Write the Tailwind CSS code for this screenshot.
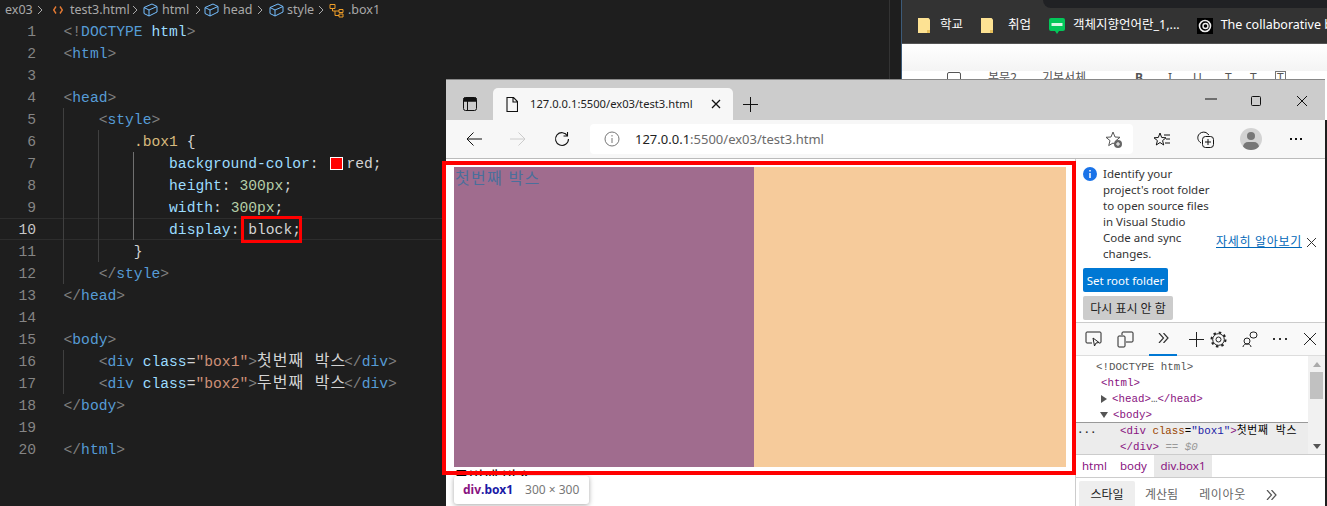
<!DOCTYPE html>
<html lang="ko">
<head>
<meta charset="UTF-8">
<title>test3.html</title>
<script src="https://cdn.jsdelivr.net/npm/@tailwindcss/browser@4"></script>
</head>
<body class="relative w-[1327px] h-[506px] overflow-hidden bg-[#1e1e1e] font-['Noto_Sans','Noto_Sans_CJK_KR',sans-serif]">

<!-- Editor window -->
<div class="absolute left-0 top-0 w-[890px] h-[506px] overflow-hidden bg-[#1e1e1e] border-r border-[#333]">
  <!-- breadcrumb -->
  <div class="h-[20px] pl-[5px] flex items-center text-[12.5px] text-[#a9a9a9] leading-none">
    <span class="w-[27px]">ex03</span>
    <svg class="ml-[5px] w-[6px] h-[10px]" viewBox="0 0 6 10" fill="none" stroke="#a9a9a9"><path d="M1 1l4 4-4 4"/></svg>
    <svg class="ml-[10px] w-[10px] h-[10px]" viewBox="0 0 10 10" fill="none" stroke="#e37933" stroke-width="1.4"><path d="M3 1.500L.7 5 3 8.500M7 1.500L9.300 5 7 8.500"/></svg>
    <span class="ml-[7px] w-[57px]">test3.html</span>
    <svg class="ml-[5px] w-[6px] h-[10px]" viewBox="0 0 6 10" fill="none" stroke="#a9a9a9"><path d="M1 1l4 4-4 4"/></svg>
    <svg class="ml-[5px] w-[15px] h-[14px]" viewBox="0 0 15 14" fill="none" stroke="#75beff"><path d="M1 4.500L9 1l5 2.500v5.500L6 13 1 10.500zM1 4.500L6 7l8-3.500M6 7v6"/></svg>
    <span class="ml-[4px] w-[28px]">html</span>
    <svg class="ml-[5px] w-[6px] h-[10px]" viewBox="0 0 6 10" fill="none" stroke="#a9a9a9"><path d="M1 1l4 4-4 4"/></svg>
    <svg class="ml-[3px] w-[15px] h-[14px]" viewBox="0 0 15 14" fill="none" stroke="#75beff"><path d="M1 4.500L9 1l5 2.500v5.500L6 13 1 10.500zM1 4.500L6 7l8-3.500M6 7v6"/></svg>
    <span class="ml-[4px] w-[28px]">head</span>
    <svg class="ml-[6px] w-[6px] h-[10px]" viewBox="0 0 6 10" fill="none" stroke="#a9a9a9"><path d="M1 1l4 4-4 4"/></svg>
    <svg class="ml-[6px] w-[15px] h-[14px]" viewBox="0 0 15 14" fill="none" stroke="#75beff"><path d="M1 4.500L9 1l5 2.500v5.500L6 13 1 10.500zM1 4.500L6 7l8-3.500M6 7v6"/></svg>
    <span class="ml-[3px] w-[27px]">style</span>
    <svg class="ml-[4px] w-[6px] h-[10px]" viewBox="0 0 6 10" fill="none" stroke="#a9a9a9"><path d="M1 1l4 4-4 4"/></svg>
    <svg class="ml-[5px] w-[16px] h-[15px]" viewBox="0 0 16 15" fill="none" stroke="#ee9d28"><path d="M1 1.500h5v4H1zM10 6.500h4v3h-4zM10 11h4v3h-4zM3.500 5.500V8H10M6 8v4.500h4"/></svg>
    <span class="ml-[3px]">.box1</span>
  </div>

  <!-- code -->
  <div class="relative flex flex-col font-['Liberation_Mono','Noto_Sans_CJK_KR',monospace] text-[14.67px] leading-[24px] text-[#d4d4d4] whitespace-pre">
    <span class="absolute left-[63px] top-[88px] h-[176px] w-px bg-[#404040]"></span>
    <span class="absolute left-[98px] top-[110px] h-[132px] w-px bg-[#404040]"></span>
    <span class="absolute left-[133px] top-[132px] h-[88px] w-px bg-[#707070]"></span>
    <span class="absolute left-[63px] top-[330px] h-[44px] w-px bg-[#404040]"></span>
    <div class="flex h-[22px]"><span class="w-[36px] text-right text-[#858585]">1</span><span class="ml-[27.500px]"><b class="font-normal text-[#808080]">&lt;!</b><b class="font-normal text-[#569cd6]">DOCTYPE</b> <b class="font-normal text-[#9cdcfe]">html</b><b class="font-normal text-[#808080]">&gt;</b></span></div>
    <div class="flex h-[22px]"><span class="w-[36px] text-right text-[#858585]">2</span><span class="ml-[27.500px]"><b class="font-normal text-[#808080]">&lt;</b><b class="font-normal text-[#569cd6]">html</b><b class="font-normal text-[#808080]">&gt;</b></span></div>
    <div class="flex h-[22px]"><span class="w-[36px] text-right text-[#858585]">3</span></div>
    <div class="flex h-[22px]"><span class="w-[36px] text-right text-[#858585]">4</span><span class="ml-[27.500px]"><b class="font-normal text-[#808080]">&lt;</b><b class="font-normal text-[#569cd6]">head</b><b class="font-normal text-[#808080]">&gt;</b></span></div>
    <div class="flex h-[22px]"><span class="w-[36px] text-right text-[#858585]">5</span><span class="ml-[27.500px]">    <b class="font-normal text-[#808080]">&lt;</b><b class="font-normal text-[#569cd6]">style</b><b class="font-normal text-[#808080]">&gt;</b></span></div>
    <div class="flex h-[22px]"><span class="w-[36px] text-right text-[#858585]">6</span><span class="ml-[27.500px]">        <b class="font-normal text-[#d7ba7d]">.box1</b> {</span></div>
    <div class="flex h-[22px]"><span class="w-[36px] text-right text-[#858585]">7</span><span class="ml-[27.500px]">            <b class="font-normal text-[#9cdcfe]">background-color</b>: <i class="inline-block align-[-2px] ml-[2.600px] mr-[3.500px] w-[13px] h-[13px] bg-[#ff0000] border border-white"></i>red;</span></div>
    <div class="flex h-[22px]"><span class="w-[36px] text-right text-[#858585]">8</span><span class="ml-[27.500px]">            <b class="font-normal text-[#9cdcfe]">height</b>: <b class="font-normal text-[#b5cea8]">300px</b>;</span></div>
    <div class="flex h-[22px]"><span class="w-[36px] text-right text-[#858585]">9</span><span class="ml-[27.500px]">            <b class="font-normal text-[#9cdcfe]">width</b>: <b class="font-normal text-[#b5cea8]">300px</b>;</span></div>
    <div class="flex h-[22px] border-y border-[#2d2d2d] leading-[22px]"><span class="w-[36px] text-right text-[#c6c6c6]">10</span><span class="ml-[27.500px]">            <b class="font-normal text-[#9cdcfe]">display</b>: block;</span></div>
    <div class="flex h-[22px]"><span class="w-[36px] text-right text-[#858585]">11</span><span class="ml-[27.500px]">        }</span></div>
    <div class="flex h-[22px]"><span class="w-[36px] text-right text-[#858585]">12</span><span class="ml-[27.500px]">    <b class="font-normal text-[#808080]">&lt;/</b><b class="font-normal text-[#569cd6]">style</b><b class="font-normal text-[#808080]">&gt;</b></span></div>
    <div class="flex h-[22px]"><span class="w-[36px] text-right text-[#858585]">13</span><span class="ml-[27.500px]"><b class="font-normal text-[#808080]">&lt;/</b><b class="font-normal text-[#569cd6]">head</b><b class="font-normal text-[#808080]">&gt;</b></span></div>
    <div class="flex h-[22px]"><span class="w-[36px] text-right text-[#858585]">14</span></div>
    <div class="flex h-[22px]"><span class="w-[36px] text-right text-[#858585]">15</span><span class="ml-[27.500px]"><b class="font-normal text-[#808080]">&lt;</b><b class="font-normal text-[#569cd6]">body</b><b class="font-normal text-[#808080]">&gt;</b></span></div>
    <div class="flex h-[22px]"><span class="w-[36px] text-right text-[#858585]">16</span><span class="ml-[27.500px]">    <b class="font-normal text-[#808080]">&lt;</b><b class="font-normal text-[#569cd6]">div</b> <b class="font-normal text-[#9cdcfe]">class</b>=<b class="font-normal text-[#ce9178]">"box1"</b><b class="font-normal text-[#808080]">&gt;</b><span class="inline-block w-[87px] text-[16px] tracking-[1px]">첫번째 박스</span><b class="font-normal text-[#808080]">&lt;/</b><b class="font-normal text-[#569cd6]">div</b><b class="font-normal text-[#808080]">&gt;</b></span></div>
    <div class="flex h-[22px]"><span class="w-[36px] text-right text-[#858585]">17</span><span class="ml-[27.500px]">    <b class="font-normal text-[#808080]">&lt;</b><b class="font-normal text-[#569cd6]">div</b> <b class="font-normal text-[#9cdcfe]">class</b>=<b class="font-normal text-[#ce9178]">"box2"</b><b class="font-normal text-[#808080]">&gt;</b><span class="inline-block w-[87px] text-[16px] tracking-[1px]">두번째 박스</span><b class="font-normal text-[#808080]">&lt;/</b><b class="font-normal text-[#569cd6]">div</b><b class="font-normal text-[#808080]">&gt;</b></span></div>
    <div class="flex h-[22px]"><span class="w-[36px] text-right text-[#858585]">18</span><span class="ml-[27.500px]"><b class="font-normal text-[#808080]">&lt;/</b><b class="font-normal text-[#569cd6]">body</b><b class="font-normal text-[#808080]">&gt;</b></span></div>
    <div class="flex h-[22px]"><span class="w-[36px] text-right text-[#858585]">19</span></div>
    <div class="flex h-[22px]"><span class="w-[36px] text-right text-[#858585]">20</span><span class="ml-[27.500px]"><b class="font-normal text-[#808080]">&lt;/</b><b class="font-normal text-[#569cd6]">html</b><b class="font-normal text-[#808080]">&gt;</b></span></div>
  </div>
</div>

<!-- Dark browser window behind -->
<div class="absolute left-[901px] top-0 w-[426px] h-[120px] bg-white border-l border-[#3c5a78] overflow-hidden">
  <div class="h-[8px] bg-[#333] flex">
    <div class="ml-[141px] flex-1 h-[8px] bg-[#202124] rounded-bl-[8px]"></div>
  </div>
  <div class="h-[36px] bg-[#333] border-b border-[#555] flex items-center text-[12.5px] text-white leading-none whitespace-nowrap overflow-hidden">
    <svg class="ml-[16px] shrink-0 w-[12px] h-[15px]" viewBox="0 0 12 15"><path d="M0 0h10.500L12 1.500V15H0z" fill="#fde293"/><path d="M9 12h3v3H9z" fill="#e8c15c"/></svg>
    <span class="ml-[10px]">학교</span>
    <svg class="ml-[18px] shrink-0 w-[12px] h-[15px]" viewBox="0 0 12 15"><path d="M0 0h10.500L12 1.500V15H0z" fill="#fde293"/><path d="M9 12h3v3H9z" fill="#e8c15c"/></svg>
    <span class="ml-[15px]">취업</span>
    <svg class="ml-[18px] shrink-0 w-[16px] h-[16px]" viewBox="0 0 16 16"><path d="M2 0h12a2 2 0 012 2v9a2 2 0 01-2 2h-4l-2 3-2-3H2a2 2 0 01-2-2V2a2 2 0 012-2z" fill="#03c75a"/><rect x="2.500" y="5" width="11" height="3" fill="#d8f7e4"/></svg>
    <span class="ml-[8px] w-[108px]">객체지향언어란_1,...</span>
    <svg class="ml-[17px] shrink-0 w-[16px] h-[16px]" viewBox="0 0 16 16"><rect width="16" height="16" fill="#000"/><circle cx="8" cy="8" r="5.500" fill="none" stroke="#eee" stroke-width="1.600"/><circle cx="8.500" cy="8" r="2.500" fill="none" stroke="#eee" stroke-width="1.400"/></svg>
    <span class="ml-[8px]">The collaborative b.</span>
  </div>
  <div class="h-[27px] bg-linear-to-b from-white to-[#f4f4f4]"></div>
  <div class="flex items-center h-[14px] pl-[45px] text-[12px] text-[#555] whitespace-nowrap leading-none">
    <span class="w-[14px] h-[12px] border border-[#555] rounded-[2px]"></span>
    <span class="ml-[27px] w-[40px]">본문2...</span><span class="ml-[14px] w-[50px]">기본서체...</span><span class="ml-[43px] w-[8px] font-bold">B</span><span class="ml-[25px] w-[3px]">I</span><span class="ml-[22px] w-[9px]">U</span><span class="ml-[23px] w-[7px]">T</span><span class="ml-[18px] w-[7px]">T</span><span class="ml-[18px] border border-[#777] px-[1px]">T</span>
  </div>
</div>

<!-- Edge browser window -->
<div class="absolute left-[446px] top-[79px] w-[879px] h-[427px] flex flex-col bg-white border-t border-[#888] overflow-hidden text-black">
  <!-- tab strip -->
  <div class="h-[40px] shrink-0 bg-[#cccccc] flex items-end">
    <svg class="ml-[17px] mb-[9px] w-[14px] h-[14px]" viewBox="0 0 14 14" fill="none" stroke="#111"><rect x=".5" y=".5" width="13" height="13" rx="2"/><path d="M.5 4h13M4.500 4v9.500" /><path d="M1 1h12v3H1z" fill="#111"/></svg>
    <div class="ml-[16px] w-[240px] h-[32px] bg-[#f7f7f7] rounded-t-[5px] flex items-center pl-[13px] text-[11.2px] text-[#222] leading-none">
      <svg class="w-[12px] h-[15px]" viewBox="0 0 12 15" fill="none" stroke="#111" stroke-width="1.100"><path d="M1 .5h6.500L11.500 4.500v10H1zM7 .5v4.500h4.500"/></svg>
      <span class="ml-[12px] w-[161px] whitespace-nowrap">127.0.0.1:5500/ex03/test3.html</span>
      <svg class="ml-[20px] w-[10px] h-[10px]" viewBox="0 0 10 10" stroke="#111" stroke-width="1.300"><path d="M1 1l8 8M9 1l-8 8"/></svg>
    </div>
    <svg class="ml-[10px] mb-[8px] w-[15px] h-[15px]" viewBox="0 0 15 15" stroke="#111"><path d="M7.500 0v15M0 7.500h15"/></svg>
    <svg class="ml-[447px] mb-[20px] w-[12px] h-[2px]" viewBox="0 0 12 2" stroke="#111"><path d="M0 1h12"/></svg>
    <svg class="ml-[34px] mb-[14px] w-[10px] h-[10px]" viewBox="0 0 10 10" fill="none" stroke="#111"><rect x=".5" y=".5" width="9" height="9" rx="1"/></svg>
    <svg class="ml-[36px] mb-[14px] w-[10px] h-[10px]" viewBox="0 0 10 10" stroke="#111"><path d="M0 0l10 10M10 0L0 10"/></svg>
  </div>
  <!-- address toolbar -->
  <div class="h-[39px] shrink-0 bg-[#f7f7f7] border-b border-[#bbb] flex items-center">
    <svg class="ml-[20px] w-[16px] h-[14px]" viewBox="0 0 16 14" fill="none" stroke="#111"><path d="M16 7H1M7.500.5L1 7l6.500 6.500"/></svg>
    <svg class="ml-[28px] w-[16px] h-[14px]" viewBox="0 0 16 14" fill="none" stroke="#ccc"><path d="M0 7h15M8.500.5L15 7l-6.500 6.500"/></svg>
    <svg class="ml-[28px] w-[16px] h-[16px]" viewBox="0 0 16 16" fill="none" stroke="#111" stroke-width="1.100"><path d="M14.500 8A6.500 6.500 0 113 3.800M13.500 1v4h-4"/><path d="M3 3.800A6.500 6.500 0 0113.500 5"/></svg>
    <div class="ml-[20px] w-[543px] h-[30px] bg-white rounded-[4px] flex items-center pl-[14px] text-[13px] leading-none">
      <svg class="w-[16px] h-[16px]" viewBox="0 0 16 16" fill="none" stroke="#777"><circle cx="8" cy="8" r="7"/><path d="M8 7v5M8 4v1.500"/></svg>
      <span class="ml-[15px] text-[#222]">127.0.0.1</span><span class="text-[#6b6b6b]">:5500/ex03/test3.html</span>
      <svg class="ml-auto mr-[11px] w-[17px] h-[17px]" viewBox="0 0 17 17"><path d="M8 1l2 5 5 .3-4 3.300 1.300 5L8 12l-4.300 2.600L5 9.600 1 6.300 6 6z" fill="none" stroke="#555"/><circle cx="13" cy="13" r="4" fill="#666"/><path d="M13 11v4M11 13h4" stroke="#fff"/></svg>
    </div>
    <svg class="ml-[20px] w-[17px] h-[15px]" viewBox="0 0 17 15" fill="none" stroke="#111"><path d="M7 1l1.700 4.500 4.300.3-3.400 2.800 1.100 4.400L7 10.500l-3.700 2.500 1.100-4.400L1 5.800l4.300-.3z"/><path d="M11 3h6M13 7h4M12 11h5"/></svg>
    <svg class="ml-[27px] w-[17px] h-[17px]" viewBox="0 0 17 17" fill="none" stroke="#111"><path d="M4 12C1 10 0 7 1.500 4 3 1.500 6 .5 9 1.500L12 4"/><rect x="5.500" y="5.500" width="11" height="11" rx="3" fill="#f7f7f7"/><path d="M11 8v6M8 11h6"/></svg>
    <div class="ml-[26px] relative w-[22px] h-[22px] rounded-full bg-[#d3d3d3] overflow-hidden"><span class="absolute left-[7px] top-[4px] w-[8px] h-[8px] rounded-full bg-[#777]"></span><span class="absolute left-[3px] top-[14px] w-[16px] h-[10px] rounded-full bg-[#777]"></span></div>
    <div class="ml-[28px] flex gap-[3px]"><span class="w-[2px] h-[2px] bg-[#111]"></span><span class="w-[2px] h-[2px] bg-[#111]"></span><span class="w-[2px] h-[2px] bg-[#111]"></span></div>
  </div>

  <div class="flex flex-1 min-h-0">
    <!-- viewport -->
    <div class="relative w-[629px] shrink-0 bg-white pt-[8px] pl-[8px] overflow-hidden">
      <div class="flex">
        <div class="w-[300px] h-[300px] bg-[#a06c8e] text-[16px] leading-[23px] text-[#4a6f9c] pl-[1px] tracking-[1.300px]">첫번째 박스</div>
        <div class="w-[312px] h-[300px] bg-[#f6cb9b]"></div>
      </div>
      <div class="text-[16px] leading-[21px]">두번째 박스</div>
      <div class="absolute left-[8px] top-[317px] w-[135px] h-[28px] bg-white rounded-[3px] shadow-[0_1px_5px_rgba(0,0,0,0.35)] flex items-center pl-[9px] text-[12px] leading-none">
        <span class="font-bold text-[#881280]">div</span><span class="font-bold text-[#1a1aa6]">.box1</span>
        <span class="ml-[12px] text-[#777]">300 × 300</span>
      </div>
    </div>

    <!-- devtools -->
    <div class="w-[250px] shrink-0 border-l border-[#ccc] flex flex-col text-[12px] leading-[16px]">
      <div class="h-[164px] shrink-0 relative border-b border-[#ccc] pl-[7px] pt-[7px]">
        <div class="flex text-[11.5px]">
          <svg class="mt-px w-[14px] h-[14px] shrink-0" viewBox="0 0 14 14"><circle cx="7" cy="7" r="7" fill="#1a73e8"/><path d="M7 6v5M7 3v1.500" stroke="#fff" stroke-width="1.500"/></svg>
          <div class="ml-[6px] w-[110px] shrink-0 whitespace-nowrap text-[#333]">Identify your<br>project's root folder<br>to open source files<br>in Visual Studio<br>Code and sync<br>changes.</div>
          <div class="self-end ml-[3px] mb-[12px] flex items-center whitespace-nowrap text-[12px]"><span class="text-[#0067b8] underline tracking-[.7px]">자세히 알아보기</span><svg class="ml-[5px] w-[9px] h-[9px]" viewBox="0 0 9 9" stroke="#333"><path d="M0 0l9 9M9 0L0 9"/></svg></div>
        </div>
        <div class="mt-[6px] w-[85px] h-[24px] pt-px text-[11.500px] bg-[#0078d4] text-white rounded-[2px] flex items-center justify-center whitespace-nowrap">Set root folder</div>
        <div class="mt-[4px] w-[90px] h-[24px] pt-px bg-[#cccccc] text-[#222] rounded-[2px] flex items-center justify-center whitespace-nowrap">다시 표시 안 함</div>
      </div>
      <!-- devtools toolbar -->
      <div class="h-[33px] shrink-0 bg-[#f9f9f9] border-b border-[#ddd] flex items-center">
        <svg class="ml-[9px] w-[17px] h-[16px]" viewBox="0 0 17 16" fill="none" stroke="#222"><path d="M7 12H2a1 1 0 01-1-1V2a1 1 0 011-1h13a1 1 0 011 1v9a1 1 0 01-1 1h-1"/><path d="M8 7l1.500 8 1.500-3 3-.5z"/></svg>
        <svg class="ml-[15px] w-[17px] h-[17px]" viewBox="0 0 17 17" fill="none" stroke="#222"><path d="M5 4V2a1 1 0 011-1h9a1 1 0 011 1v8a1 1 0 01-1 1h-6"/><rect x="1" y="5" width="7" height="11" rx="1"/></svg>
        <div class="ml-[15px] relative h-[33px] w-[28px] flex items-center justify-center border-b-[2px] border-[#0078d4]"><svg class="w-[11px] h-[10px]" viewBox="0 0 11 10" fill="none" stroke="#333" stroke-width="1.200"><path d="M1 0l4.500 5L1 10M5.500 0L10 5l-4.500 5"/></svg></div>
        <svg class="ml-[12px] w-[15px] h-[15px]" viewBox="0 0 15 15" stroke="#222"><path d="M7.500 0v15M0 7.500h15"/></svg>
        <svg class="ml-[6px] w-[17px] h-[17px]" viewBox="0 0 17 17" fill="none" stroke="#222"><circle cx="8.500" cy="8.500" r="2.500"/><circle cx="8.500" cy="8.500" r="5.800"/><circle cx="8.500" cy="8.500" r="7" stroke-width="2" stroke-dasharray="2.500 3"/></svg>
        <svg class="ml-[15px] w-[16px] h-[16px]" viewBox="0 0 16 16" fill="none" stroke="#222"><circle cx="5" cy="10" r="3"/><path d="M1 16c0-2 2-3 4-3s4 1 4 3"/><rect x="8" y="1" width="7" height="6" rx="3"/></svg>
        <div class="ml-[15px] flex gap-[4px]"><span class="w-[2px] h-[2px] bg-[#333]"></span><span class="w-[2px] h-[2px] bg-[#333]"></span><span class="w-[2px] h-[2px] bg-[#333]"></span></div>
        <svg class="ml-[17px] w-[12px] h-[12px]" viewBox="0 0 12 12" stroke="#222"><path d="M0 0l12 12M12 0L0 12"/></svg>
      </div>
      <!-- DOM tree -->
      <div class="h-[99px] shrink-0 flex font-['Liberation_Mono','Noto_Sans_CJK_KR',monospace] text-[10.800px] leading-[16px] border-b border-[#ccc]">
        <div class="flex-1 min-w-0 whitespace-nowrap overflow-hidden flex flex-col">
          <div class="h-[66px] pt-[3px]">
            <div class="pl-[20px] text-[#555]">&lt;!DOCTYPE html&gt;</div>
            <div class="pl-[25px] text-[#881280]">&lt;html&gt;</div>
            <div class="pl-[25px] flex items-center text-[#881280]"><i class="w-0 h-0 border-y-[4px] border-y-transparent border-l-[6px] border-l-[#555] mr-[5px]"></i>&lt;head&gt;<span class="text-[#555]">…</span>&lt;/head&gt;</div>
            <div class="pl-[24px] flex items-center text-[#881280]"><i class="w-0 h-0 border-x-[4px] border-x-transparent border-t-[6px] border-t-[#555] mr-[5px]"></i>&lt;body&gt;</div>
          </div>
          <div class="flex-1 bg-[#ececec] border-t border-[#999] relative pl-[44px]">
            <span class="absolute left-[1px] top-px font-bold text-[#333]">···</span>
            <div><span class="text-[#881280]">&lt;div</span> <span class="text-[#994500]">class</span>=<span class="text-[#1a1aa6]">"box1"</span><span class="text-[#881280]">&gt;</span><span class="text-black tracking-[.7px]">첫번째 박스</span></div>
            <div><span class="text-[#881280]">&lt;/div&gt;</span> <span class="italic text-[#999]">== $0</span></div>
          </div>
        </div>
        <div class="w-[17px] shrink-0 bg-[#f1f1f1] flex flex-col items-center">
          <i class="mt-[6px] w-0 h-0 border-x-[4px] border-x-transparent border-b-[5px] border-b-[#aaa]"></i>
          <i class="mt-[5px] w-[13px] h-[27px] bg-[#c1c1c1]"></i>
          <i class="mt-auto mb-[5px] w-0 h-0 border-x-[4px] border-x-transparent border-t-[5px] border-t-[#555]"></i>
        </div>
      </div>
      <!-- element breadcrumb -->
      <div class="h-[23px] shrink-0 border-b border-[#ccc] flex items-stretch pl-[6px] text-[#881280] text-[11.5px]">
        <span class="flex items-center w-[24px]">html</span>
        <span class="flex items-center ml-[14px] w-[27px]">body</span>
        <span class="flex items-center ml-[7px] w-[58px] justify-center bg-[#e8e8e8]">div.box1</span>
      </div>
      <!-- styles tabs -->
      <div class="flex-1 bg-white pl-[3px] pt-[3px] flex items-stretch text-[#666]">
        <span class="w-[56px] pt-[3px] bg-[#eeeeee] rounded-t-[2px] text-[#222] flex items-center justify-center">스타일</span>
        <span class="ml-[10px] pt-[3px] flex items-center">계산됨</span>
        <span class="ml-[21px] pt-[3px] flex items-center tracking-[.7px]">레이아웃</span>
        <svg class="ml-[20px] mt-[9px] w-[11px] h-[10px]" viewBox="0 0 11 10" fill="none" stroke="#555" stroke-width="1.200"><path d="M1 0l4.500 5L1 10M5.500 0L10 5l-4.500 5"/></svg>
      </div>
    </div>
  </div>
</div>

<!-- red annotation boxes -->
<div class="absolute left-[442px] top-[161px] w-[634px] h-[314px] border-[4px] border-[#ff0000]"></div>
<div class="absolute left-[241px] top-[216px] w-[61px] h-[27px] border-[3px] border-[#ff0000]"></div>
</body>
</html>
